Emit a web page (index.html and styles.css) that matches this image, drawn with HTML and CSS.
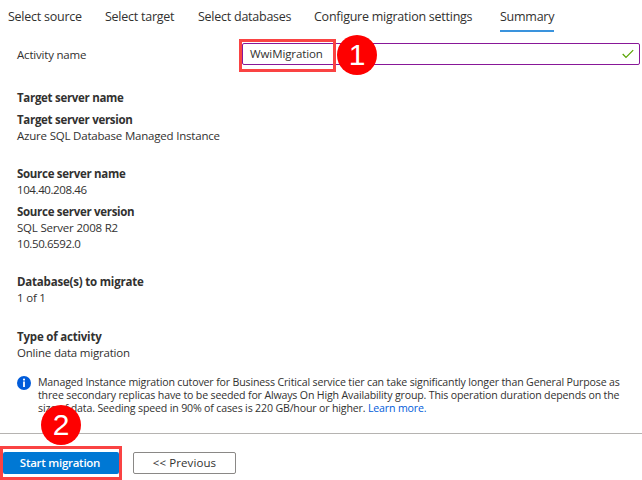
FILE: index.html
```html
<!DOCTYPE html>
<html lang="en">
<head>
<meta charset="utf-8">
<title>Migration summary</title>
<link rel="stylesheet" href="styles.css">
</head>
<body>
<nav class="tabs">
  <span class="tab tab-source">Select source</span>
  <span class="tab tab-target">Select target</span>
  <span class="tab tab-databases">Select databases</span>
  <span class="tab tab-settings">Configure migration settings</span>
  <span class="tab tab-summary active">Summary</span>
</nav>
<main class="content">
  <div class="field">
    <label class="field-label">Activity name</label>
    <div class="input">
      <span class="input-value">WwiMigration</span>
      <svg class="check" width="12" height="10" viewBox="0 0 12 10"><path d="M.7 5 4 8.4 11.2 1.2" fill="none" stroke="#57a300" stroke-width="1.2"/></svg>
      <div class="highlight highlight-input"></div>
      <div class="badge badge-one">1</div>
    </div>
  </div>
  <dl class="details">
    <div class="item"><dt>Target server name</dt></div>
    <div class="item gap"><dt>Target server version</dt><dd>Azure SQL Database Managed Instance</dd></div>
    <div class="item"><dt>Source server name</dt><dd class="number">104.40.208.46</dd></div>
    <div class="item gap"><dt>Source server version</dt><dd>SQL Server 2008 R2</dd><dd class="number">10.50.6592.0</dd></div>
    <div class="item gap"><dt class="wide">Database(s) to migrate</dt><dd>1 of 1</dd></div>
    <div class="item type"><dt class="wide">Type of activity</dt><dd>Online data migration</dd></div>
  </dl>
  <div class="info">
    <svg class="info-icon" width="14" height="14" viewBox="0 0 14 14"><circle cx="7" cy="7" r="7" fill="#015cda"/><circle cx="7" cy="3.6" r="1.1" fill="#fff"/><path d="M6.1 5.6h1.8v5.4H6.1z" fill="#fff"/></svg>
    <p class="info-text"><span class="line">Managed Instance migration cutover for Business Critical service tier can take significantly longer than General Purpose as</span><span class="line">three secondary replicas have to be seeded for Always On High Availability group. This operation duration depends on the</span><span class="line">size of data. Seeding speed in 90% of cases is 220 GB/hour or higher. <a class="link">Learn more.</a></span></p>
  </div>
</main>
<footer class="footer">
  <div class="button primary"><span>Start migration</span>
    <div class="highlight highlight-button"></div>
    <div class="badge badge-two">2</div>
  </div>
  <div class="button secondary"><span>&lt;&lt; Previous</span></div>
</footer>
</body>
</html>
```
FILE: styles.css
```css
* { box-sizing: border-box; }
body {
  margin: 0;
  width: 642px;
  height: 480px;
  overflow: hidden;
  background: #fff;
  color: #323130;
  font: 11.5px/16px "Open Sans", "Noto Sans", sans-serif;
  letter-spacing: -.2px;
  white-space: nowrap;
}
.tabs { display: flex; height: 32px; padding-left: 8px; font-size: 12.5px; line-height: 33px; letter-spacing: -.25px; }
.tab { flex: none; height: 32px; }
.tab-source { width: 97px; }
.tab-target { width: 93px; }
.tab-databases { width: 116px; }
.tab-settings { width: 186px; }
.tab-summary { width: 54px; }
.active { height: 32px; border-bottom: 2px solid #3a93dd; }
.content { height: 401px; padding: 11px 0 0 17px; }
.field { display: flex; height: 22px; }
.field-label { width: 225px; line-height: 24px; }
.input {
  position: relative;
  display: flex;
  justify-content: space-between;
  align-items: center;
  width: 398px;
  height: 22px;
  padding: 0 5px 0 7px;
  border: 1px solid #881798;
  border-radius: 2px;
}
.input-value { letter-spacing: -.1px; }
.highlight { position: absolute; border: 3px solid #fa4343; }
.highlight-input { left: -4px; top: -5px; width: 97px; height: 33px; }
.badge {
  position: absolute;
  width: 40px;
  height: 40px;
  border-radius: 50%;
  background: #fe0000;
  color: #fff;
  font: 30px/40px "Liberation Sans", Arial, sans-serif;
  text-align: center;
}
.badge-one { left: 94px; top: -9px; }
.details { margin: 25px 0 0; }
.item { margin-bottom: 6px; }
.item.gap { margin-bottom: 22px; }
.item.type { margin-bottom: 0; padding-top: 1px; }
dt { font-weight: 700; letter-spacing: -.3px; }
dt.wide { letter-spacing: -.2px; }
dd { margin: 0; }
dd.number { letter-spacing: -.4px; }
.info { display: flex; margin-top: 15px; }
.info-icon { flex: none; margin-right: 7px; }
.info-text { margin: 0; font-size: 10.6px; line-height: 13px; letter-spacing: -.16px; }
.line { display: block; }
.link { color: #015cda; }
.footer { display: flex; height: 47px; padding: 18px 0 0 3px; border-top: 1px solid #b5b3b1; }
.button { position: relative; display: flex; justify-content: center; align-items: center; height: 22px; border-radius: 2px; }
.primary { width: 116px; margin-right: 14px; padding-right: 2px; background: #0078d4; color: #fff; font-weight: 600; letter-spacing: -.27px; }
.secondary { width: 103px; border: 1px solid #8a8886; letter-spacing: .1px; }
.highlight-button { left: -3px; top: -6px; width: 122px; height: 34px; }
.badge-two { left: 38px; top: -47px; }
```
